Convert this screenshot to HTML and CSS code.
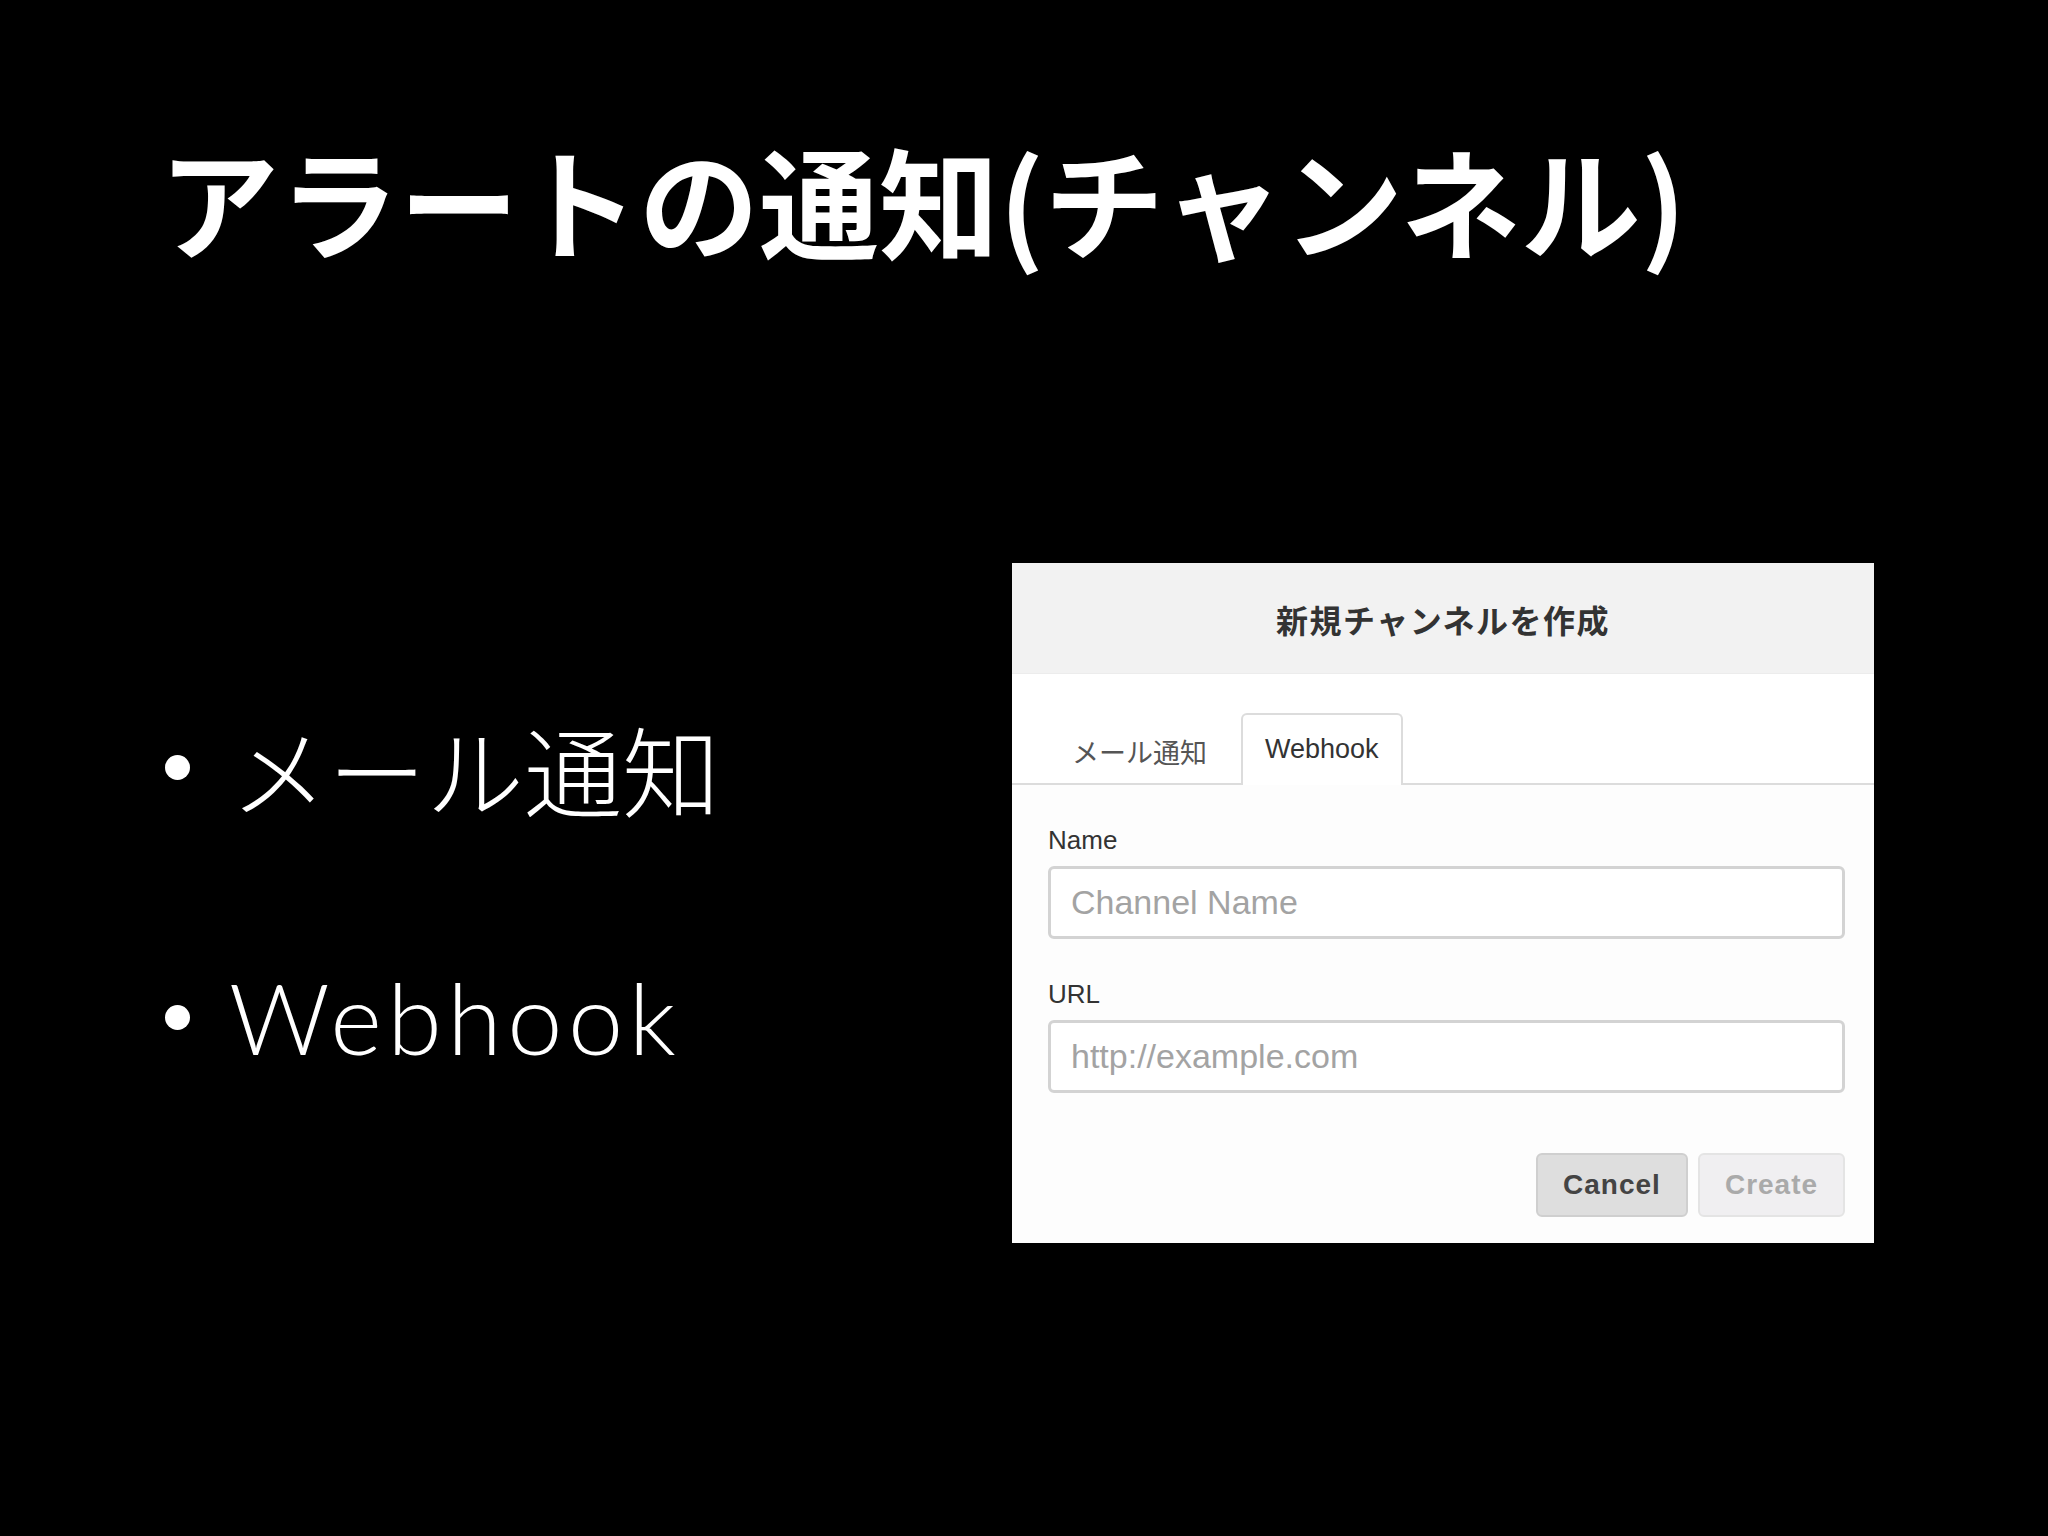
FILE: index.html
```html
<!DOCTYPE html>
<html lang="ja">
<head>
<meta charset="utf-8">
<title>アラートの通知(チャンネル)</title>
<link rel="stylesheet" href="styles.css">
</head>
<body>
<main class="slide">
  <h1 class="slide-title">アラートの通知(チャンネル)</h1>
  <div class="content">
    <ul class="bullets">
      <li class="bullet"><span class="dot"></span><span class="bullet-text">メール通知</span></li>
      <li class="bullet"><span class="dot"></span><span class="bullet-text latin">Webhook</span></li>
    </ul>
    <section class="dialog">
      <header class="dialog-header">
        <h2 class="dialog-title">新規チャンネルを作成</h2>
      </header>
      <nav class="tabs">
        <span class="tab">メール通知</span>
        <span class="tab active">Webhook</span>
      </nav>
      <div class="dialog-body">
        <label class="field-label">Name</label>
        <input class="field-input" type="text" placeholder="Channel Name">
        <label class="field-label">URL</label>
        <input class="field-input" type="text" placeholder="http://example.com">
        <div class="actions">
          <button class="btn btn-cancel" type="button">Cancel</button>
          <button class="btn btn-create" type="button">Create</button>
        </div>
      </div>
    </section>
  </div>
</main>
</body>
</html>
```
FILE: styles.css
```css
html, body {
  margin: 0;
  padding: 0;
  background: #000;
}

.slide {
  width: 2048px;
  height: 1536px;
  box-sizing: border-box;
  padding: 138px 0 0 164px;
  background: #000;
  color: #fff;
  overflow: hidden;
}

.slide-title {
  margin: 0 0 0 -5px;
  font-family: "Noto Sans CJK JP", sans-serif;
  font-weight: 700;
  font-size: 120px;
  line-height: 122px;
  height: 122px;
  letter-spacing: 0;
  white-space: nowrap;
}

.content {
  display: flex;
  margin-top: 303px;
}

.bullets {
  list-style: none;
  margin: 0;
  padding: 144px 0 0 0;
  width: 848px;
  flex: none;
}

.bullet {
  display: flex;
  align-items: center;
  height: 120px;
  margin-bottom: 130px;
}

.dot {
  width: 25px;
  height: 25px;
  border-radius: 50%;
  background: #fff;
  flex: none;
  margin-left: 1px;
  margin-right: 40px;
}

.bullet-text {
  font-family: "Noto Sans CJK JP", sans-serif;
  font-weight: 300;
  font-size: 98px;
  line-height: 120px;
  white-space: nowrap;
}

.bullet-text.latin {
  font-family: Lato, "Noto Sans CJK JP", sans-serif;
  font-weight: 300;
  font-size: 99px;
  letter-spacing: 5.5px;
  margin-left: -1px;
}

.dialog {
  width: 862px;
  height: 680px;
  flex: none;
  background: #fdfdfd;
  display: flex;
  flex-direction: column;
  font-family: "Liberation Sans", "Noto Sans CJK JP", sans-serif;
}

.dialog-header {
  height: 111px;
  background: #f2f2f2;
  border-bottom: 1px solid #ececec;
  box-sizing: border-box;
  display: flex;
  align-items: center;
  justify-content: center;
  padding-top: 2px;
}

.dialog-title {
  margin: 0;
  font-family: "Noto Sans CJK JP", sans-serif;
  font-weight: 700;
  font-size: 32px;
  color: #333;
  letter-spacing: 1.5px;
}

.tabs {
  display: flex;
  align-items: flex-end;
  height: 111px;
  box-sizing: border-box;
  padding: 0 0 0 36px;
  border-bottom: 2px solid #dcdcdc;
  background: #fff;
}

.tab {
  height: 70px;
  box-sizing: border-box;
  padding: 0 22px;
  margin-right: 10px;
  margin-bottom: -2px;
  display: flex;
  align-items: center;
  font-family: "Noto Sans CJK JP", sans-serif;
  font-size: 27px;
  color: #555;
  border: 2px solid transparent;
  border-bottom: none;
}

.tab.active {
  font-family: "Liberation Sans", sans-serif;
  color: #333;
  background: #fff;
  border-color: #dcdcdc;
  border-radius: 6px 6px 0 0;
  height: 72px;
  padding-bottom: 2px;
}

.dialog-body {
  flex: 1;
  padding: 40px 29px 0 36px;
  display: flex;
  flex-direction: column;
}

.field-label {
  font-size: 26px;
  line-height: 30px;
  color: #333;
  margin-bottom: 11px;
}

.field-input {
  height: 73px;
  box-sizing: border-box;
  border: 3px solid #d3d3d3;
  border-radius: 6px;
  padding: 0 20px;
  font-family: "Liberation Sans", sans-serif;
  font-size: 34px;
  color: #333;
  background: #fff;
  margin: 0 0 40px 0;
  outline: none;
}

.field-input::placeholder {
  color: #a3a3a3;
}

.actions {
  display: flex;
  justify-content: flex-end;
  gap: 10px;
  margin-top: 20px;
}

.btn {
  height: 64px;
  box-sizing: border-box;
  border-radius: 6px;
  font-family: "Liberation Sans", sans-serif;
  font-weight: 700;
  font-size: 28px;
  letter-spacing: 1px;
  padding: 0;
}

.btn-cancel {
  width: 152px;
  background: #dedede;
  border: 2px solid #cfcfcf;
  color: #444;
}

.btn-create {
  width: 147px;
  background: #f0eff1;
  border: 2px solid #e4e4e4;
  color: #aaa;
}
```
